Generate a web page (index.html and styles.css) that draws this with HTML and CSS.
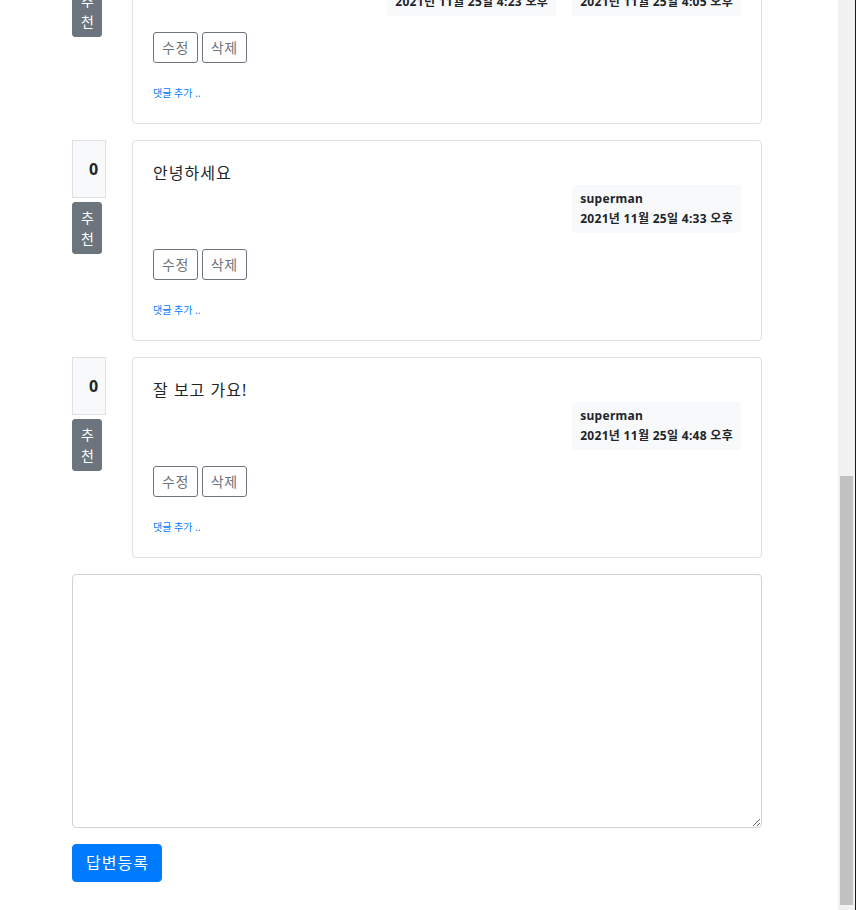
FILE: index.html
```html
<!DOCTYPE html>
<html lang="ko">
  <head>
    <meta charset="UTF-8" />
    <meta name="viewport" content="width=device-width, initial-scale=1.0" />
    <title>질문 상세</title>
    <link rel="stylesheet" href="styles.css">
  </head>
  <body>
    <div class="container">
      <!-- 첫 번째 답변 (위쪽이 잘려 보임) -->
      <div class="answer-row first">
        <div class="vote-col">
          <div class="vote-count">0</div>
          <a href="#" class="btn-recommend">추천</a>
        </div>
        <div class="card">
          <div class="card-body">
            <div class="card-text">네 반갑습니다.</div>
            <div class="meta">
              <div class="badge modified">
                <div class="badge-name">modified at</div>
                <div>2021년 11월 25일 4:23 오후</div>
              </div>
              <div class="badge">
                <div class="badge-name">superman</div>
                <div>2021년 11월 25일 4:05 오후</div>
              </div>
            </div>
            <div class="actions">
              <a href="#" class="btn-outline">수정</a>
              <a href="#" class="btn-outline">삭제</a>
            </div>
            <div class="comment-link"><small><a href="#">댓글 추가 ..</a></small></div>
          </div>
        </div>
      </div>

      <div class="answer-row">
        <div class="vote-col">
          <div class="vote-count">0</div>
          <a href="#" class="btn-recommend">추천</a>
        </div>
        <div class="card">
          <div class="card-body">
            <div class="card-text">안녕하세요</div>
            <div class="meta">
              <div class="badge">
                <div class="badge-name">superman</div>
                <div>2021년 11월 25일 4:33 오후</div>
              </div>
            </div>
            <div class="actions">
              <a href="#" class="btn-outline">수정</a>
              <a href="#" class="btn-outline">삭제</a>
            </div>
            <div class="comment-link"><small><a href="#">댓글 추가 ..</a></small></div>
          </div>
        </div>
      </div>

      <div class="answer-row">
        <div class="vote-col">
          <div class="vote-count">0</div>
          <a href="#" class="btn-recommend">추천</a>
        </div>
        <div class="card">
          <div class="card-body">
            <div class="card-text">잘 보고 가요!</div>
            <div class="meta">
              <div class="badge">
                <div class="badge-name">superman</div>
                <div>2021년 11월 25일 4:48 오후</div>
              </div>
            </div>
            <div class="actions">
              <a href="#" class="btn-outline">수정</a>
              <a href="#" class="btn-outline">삭제</a>
            </div>
            <div class="comment-link"><small><a href="#">댓글 추가 ..</a></small></div>
          </div>
        </div>
      </div>

      <form class="answer-form" onsubmit="return false">
        <textarea name="content" class="form-control" rows="10"></textarea>
        <button type="submit" class="btn-primary">답변등록</button>
      </form>
    </div>

    <div class="scrollbar"><div class="scrollbar-thumb"></div></div>
  </body>
</html>
```

FILE: styles.css
```css
body {
  margin: 0;
  font-family: "Noto Sans", "Noto Sans CJK KR", sans-serif;
  font-size: 16px;
  line-height: 1.5;
  color: #212529;
  background: #fff;
}

a {
  color: #007bff;
  text-decoration: none;
}

.container {
  width: 690px;
  margin-left: 72px;
}

.answer-row {
  display: flex;
  gap: 30px;
  margin: 16px 0;
}

/* 스크롤된 상태처럼 첫 답변 위쪽을 잘라냄 */
.answer-row.first {
  margin-top: -77px;
}

.vote-col {
  width: 30px;
  flex-shrink: 0;
}

.vote-count {
  box-sizing: border-box;
  padding: 16px;
  margin-bottom: 4px;
  text-align: center;
  font-weight: 700;
  background: #f8f9fa;
  border: 1px solid #dee2e6;
}

.btn-recommend {
  display: block;
  box-sizing: border-box;
  width: 100%;
  margin-top: 4px;
  padding: 4px 8px;
  font-size: 14px;
  line-height: 1.5;
  text-align: center;
  color: #fff;
  background: #6c757d;
  border: 1px solid #6c757d;
  border-radius: 3px;
}

.card {
  flex: 1;
  border: 1px solid rgba(0, 0, 0, 0.125);
  border-radius: 4px;
}

.card-body {
  padding: 20px;
}

.card-text {
  letter-spacing: 1px;
}

.meta {
  display: flex;
  justify-content: flex-end;
}

.badge {
  padding: 8px;
  font-size: 12px;
  font-weight: 700;
  line-height: 1;
  letter-spacing: 0.3px;
  background: #f8f9fa;
  border-radius: 4px;
  white-space: nowrap;
}

.badge.modified {
  margin: 0 16px;
}

.badge-name {
  margin-bottom: 8px;
}

.actions {
  margin: 16px 0;
  display: flex;
  gap: 4px;
}

.btn-outline {
  display: inline-block;
  padding: 4px 8px;
  font-size: 14px;
  line-height: 1.5;
  letter-spacing: 0.5px;
  color: #6c757d;
  border: 1px solid #6c757d;
  border-radius: 3px;
}

.comment-link small {
  font-size: 10px;
}

.answer-form {
  margin-top: 16px;
}

.form-control {
  display: block;
  box-sizing: border-box;
  width: 100%;
  height: 254px;
  margin: 0 0 16px;
  padding: 6px 12px;
  font-family: inherit;
  font-size: 16px;
  line-height: 1.5;
  color: #495057;
  border: 1px solid #ced4da;
  border-radius: 4px;
}

.btn-primary {
  padding: 6px 12px 6px 13px;
  font-family: inherit;
  font-size: 16px;
  line-height: 1.5;
  letter-spacing: 1px;
  color: #fff;
  background: #007bff;
  border: 1px solid #007bff;
  border-radius: 4px;
}

/* 브라우저 스크롤바 모양 */
.scrollbar {
  position: fixed;
  top: 0;
  right: 0;
  bottom: 0;
  width: 17px;
  background: #f1f1f1;
  border-right: 1px solid #1a1a1a;
}

.scrollbar-thumb {
  position: absolute;
  top: 476px;
  left: 2px;
  right: 2px;
  height: 429px;
  background: #c1c1c1;
}
```
